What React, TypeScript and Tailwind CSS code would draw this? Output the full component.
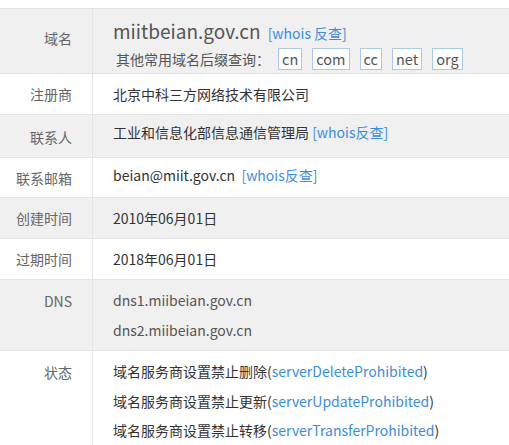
const font = { fontFamily: '"Noto Sans CJK SC", "Noto Sans", sans-serif' };

const Link = ({ children }: { children: React.ReactNode }) => (
  <span className="text-[#3b8de0]">{children}</span>
);

const Row = ({
  label,
  gray,
  children,
  labelClass = "",
}: {
  label: string;
  gray?: boolean;
  children: React.ReactNode;
  labelClass?: string;
}) => (
  <div className={`flex border-b border-[#e4e4e4] ${gray ? "bg-[#f0f0f0]" : "bg-white"}`}>
    <div
      className={`w-[93px] shrink-0 border-r border-[#e4e4e4] pr-[20px] text-right text-[#666] ${labelClass}`}
    >
      {label}
    </div>
    <div className="flex-1 pl-[20px] text-[#333]">{children}</div>
  </div>
);

const suffixes = ["cn", "com", "cc", "net", "org"];

const statuses = [
  ["域名服务商设置禁止删除", "serverDeleteProhibited"],
  ["域名服务商设置禁止更新", "serverUpdateProhibited"],
  ["域名服务商设置禁止转移", "serverTransferProhibited"],
];

export default function App() {
  return (
    <div className="h-[445px] w-[509px] overflow-hidden bg-white pt-[8px] text-[14px]" style={font}>
      <div className="border-t border-[#e4e4e4]">
        <Row label="域名" gray labelClass="pt-[19px]">
          <div className="pt-[7px] pb-[3px]">
            <div className="flex items-baseline leading-[30px]">
              <span className="text-[19px] text-[#555]">miitbeian.gov.cn</span>
              <span className="ml-[7px]">
                <Link>[whois 反查]</Link>
              </span>
            </div>
            <div className="flex items-center pl-[3px] text-[#555]">
              <span>其他常用域名后缀查询：</span>
              <div className="ml-[8px] flex gap-[10px]">
                {suffixes.map((s) => (
                  <span
                    key={s}
                    className="border border-[#a9cbe9] bg-white px-[3px] py-[1px] text-[14.5px] leading-[18px] text-[#555]"
                  >
                    {s}
                  </span>
                ))}
              </div>
            </div>
          </div>
        </Row>
        <Row label="注册商" labelClass="leading-[40px]">
          <div className="leading-[40px]">北京中科三方网络技术有限公司</div>
        </Row>
        <Row label="联系人" gray labelClass="pt-[3px] leading-[39px]">
          <div className="leading-[35px]">
            工业和信息化部信息通信管理局 <Link>[whois反查]</Link>
          </div>
        </Row>
        <Row label="联系邮箱" labelClass="pt-[2px] leading-[37px]">
          <div className="leading-[35px]">
            beian@miit.gov.cn&nbsp; <Link>[whois反查]</Link>
          </div>
        </Row>
        <Row label="创建时间" gray labelClass="leading-[40px]">
          <div className="leading-[40px]">2010年06月01日</div>
        </Row>
        <Row label="过期时间" labelClass="leading-[40px]">
          <div className="leading-[40px]">2018年06月01日</div>
        </Row>
        <Row label="DNS" gray labelClass="pt-[6px] leading-[30px]">
          <div className="py-[5px] leading-[30px] text-[#555]">
            <div>dns1.miibeian.gov.cn</div>
            <div>dns2.miibeian.gov.cn</div>
          </div>
        </Row>
        <Row label="状态" labelClass="pt-[6px] leading-[30px]">
          <div className="py-[6px] leading-[29.5px]">
            {statuses.map(([t, code]) => (
              <div key={code}>
                {t}(<Link>{code}</Link>)
              </div>
            ))}
          </div>
        </Row>
      </div>
    </div>
  );
}
